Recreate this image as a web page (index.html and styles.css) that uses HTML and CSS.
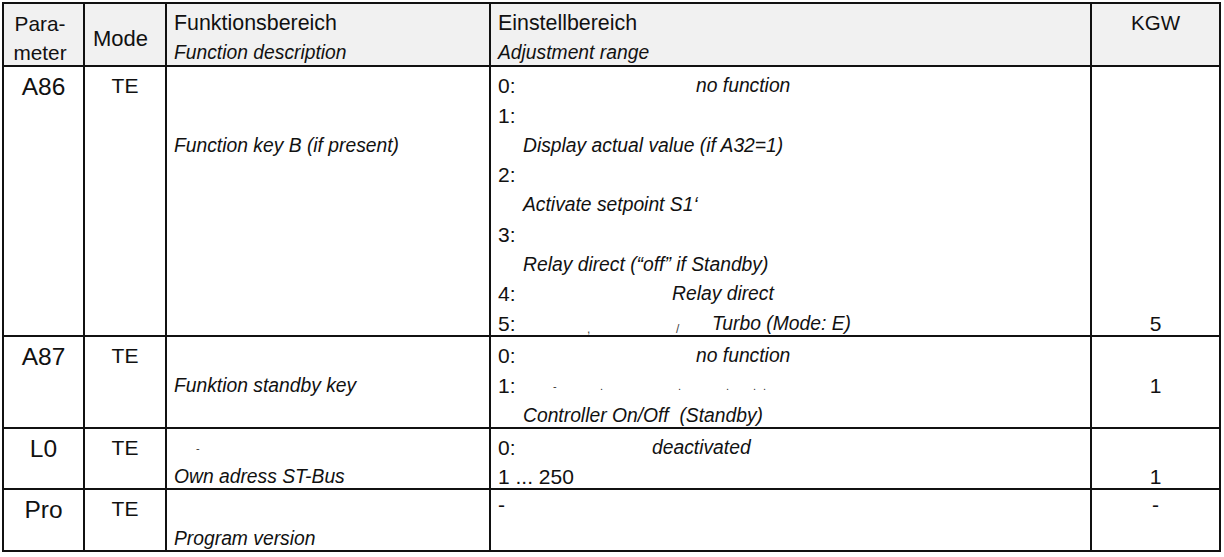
FILE: index.html
```html
<!DOCTYPE html>
<html lang="de">
<head>
<meta charset="utf-8">
<title>Parameter A86 – Pro</title>
<link rel="stylesheet" href="styles.css">
</head>
<body>
<table class="tbl">
  <colgroup>
    <col class="c-par"><col class="c-mode"><col class="c-fn"><col class="c-rng"><col class="c-kgw">
  </colgroup>
  <thead>
    <tr class="hd">
      <th class="par"><div class="hl">Para-</div><div class="hl">meter</div></th>
      <th class="mode">Mode</th>
      <th class="fn"><div class="hl up">Funktionsbereich</div><div class="hl it">Function description</div></th>
      <th class="rng"><div class="hl up">Einstellbereich</div><div class="hl it">Adjustment range</div></th>
      <th class="kgw">KGW</th>
    </tr>
  </thead>
  <tbody>
    <tr>
      <td class="par">A86</td>
      <td class="te">TE</td>
      <td class="fn">
        <div class="ln"></div><div class="ln"></div>
        <div class="ln it">Function key B (if present)</div>
      </td>
      <td class="rng">
        <div class="ln"><span class="k">0:</span><em class="v o198">no function</em></div>
        <div class="ln"><span class="k">1:</span></div>
        <div class="ln"><em class="v o25">Display actual value (if A32=1)</em></div>
        <div class="ln"><span class="k">2:</span></div>
        <div class="ln"><em class="v o25">Activate setpoint S1‘</em></div>
        <div class="ln"><span class="k">3:</span></div>
        <div class="ln"><em class="v o25">Relay direct (“off” if Standby)</em></div>
        <div class="ln"><span class="k">4:</span><em class="v o174">Relay direct</em></div>
        <div class="ln"><span class="k">5:</span><span class="k mk o89">,</span><span class="k mk o178">/</span><em class="v o214">Turbo (Mode: E)</em></div>
      </td>
      <td class="kgw">
        <div class="ln"></div><div class="ln"></div><div class="ln"></div><div class="ln"></div>
        <div class="ln"></div><div class="ln"></div><div class="ln"></div><div class="ln"></div>
        <div class="ln">5</div>
      </td>
    </tr>
    <tr>
      <td class="par">A87</td>
      <td class="te">TE</td>
      <td class="fn">
        <div class="ln"></div>
        <div class="ln it">Funktion standby key</div>
      </td>
      <td class="rng">
        <div class="ln"><span class="k">0:</span><em class="v o198">no function</em></div>
        <div class="ln"><span class="k">1:</span><span class="k mk2 o55">-</span><span class="k mk2 o102">.</span><span class="k mk2 o180">.</span><span class="k mk2 o228">.</span><span class="k mk2 o255">.</span><span class="k mk2 o265">.</span></div>
        <div class="ln"><em class="v o25">Controller On/Off&nbsp; (Standby)</em></div>
      </td>
      <td class="kgw">
        <div class="ln"></div>
        <div class="ln">1</div>
      </td>
    </tr>
    <tr>
      <td class="par">L0</td>
      <td class="te">TE</td>
      <td class="fn">
        <div class="ln"><span class="k mk2 o22">-</span></div>
        <div class="ln it">Own adress ST-Bus</div>
      </td>
      <td class="rng">
        <div class="ln"><span class="k">0:</span><em class="v o154">deactivated</em></div>
        <div class="ln">1 ... 250</div>
      </td>
      <td class="kgw">
        <div class="ln"></div>
        <div class="ln">1</div>
      </td>
    </tr>
    <tr>
      <td class="par">Pro</td>
      <td class="te">TE</td>
      <td class="fn">
        <div class="ln"></div>
        <div class="ln it">Program version</div>
      </td>
      <td class="rng">
        <div class="ln dash">-</div>
      </td>
      <td class="kgw">
        <div class="ln dash">-</div>
      </td>
    </tr>
  </tbody>
</table>
</body>
</html>
```

FILE: styles.css
```css
html, body {
  margin: 0;
  padding: 0;
  background: #ffffff;
}

body {
  font-family: "Liberation Sans", Arial, sans-serif;
  color: #111111;
  font-size: 21px;
}

.tbl {
  margin: 2px 0 0 2px;
  width: 1219px;
  border-collapse: collapse;
  table-layout: fixed;
}

.c-par { width: 81px; }
.c-mode { width: 82px; }
.c-fn { width: 324px; }
.c-rng { width: 601px; }
.c-kgw { width: 129px; }

.tbl th,
.tbl td {
  border: 2px solid #111111;
  vertical-align: top;
  padding: 4px 0 0 0;
  text-align: left;
  font-weight: 400;
}

.hd th {
  background: #f1f1f1;
  padding-top: 5px;
}

.hl {
  height: 29px;
  line-height: 29px;
  white-space: nowrap;
}

.hl:last-child {
  height: 27px;
}

.up {
  font-size: 21.4px;
}

.it {
  font-style: italic;
  font-size: 19.3px;
}

.ln {
  display: flex;
  height: 29.75px;
  line-height: 29.75px;
  white-space: pre;
}

.ln:last-child {
  height: 26px;
}

/* columns */
.hd .par {
  text-align: center;
  padding-right: 7px;
  font-size: 20.8px;
}

.hd .mode {
  padding-top: 20px;
  padding-left: 8px;
  font-size: 22px;
  line-height: 29px;
}

.hd .kgw {
  text-align: center;
  padding-top: 4px;
  font-size: 20.5px;
  line-height: 29px;
}

.fn {
  padding-left: 7px !important;
}

.rng {
  padding-left: 7px !important;
}

td.par {
  text-align: center;
  font-size: 24.5px;
  line-height: 30px;
  padding-top: 5px;
}

td.te {
  text-align: center;
  line-height: 29.75px;
}

.kgw .ln {
  justify-content: center;
}

.k {
  flex: 0 0 0;
  width: 0;
  overflow: visible;
}

.v {
  font-style: italic;
  font-size: 19.3px;
}

.o22 { margin-left: 22px; }
.o25 { margin-left: 25px; }
.o154 { margin-left: 154px; }
.o174 { margin-left: 174px; }
.o198 { margin-left: 198px; }
.o214 { margin-left: 36px; }
.o89 { margin-left: 89px; }
.o178 { margin-left: 89px; }
.o55 { margin-left: 55px; }
.o102 { margin-left: 47px; }
.o180 { margin-left: 78px; }
.o228 { margin-left: 48px; }
.o255 { margin-left: 27px; }
.o265 { margin-left: 10px; }

.mk {
  font-size: 12px;
  line-height: 40px;
  color: #444;
}

.mk2 {
  font-size: 11px;
  line-height: 30px;
  color: #333;
}

.dash {
  line-height: 22px;
}
```
